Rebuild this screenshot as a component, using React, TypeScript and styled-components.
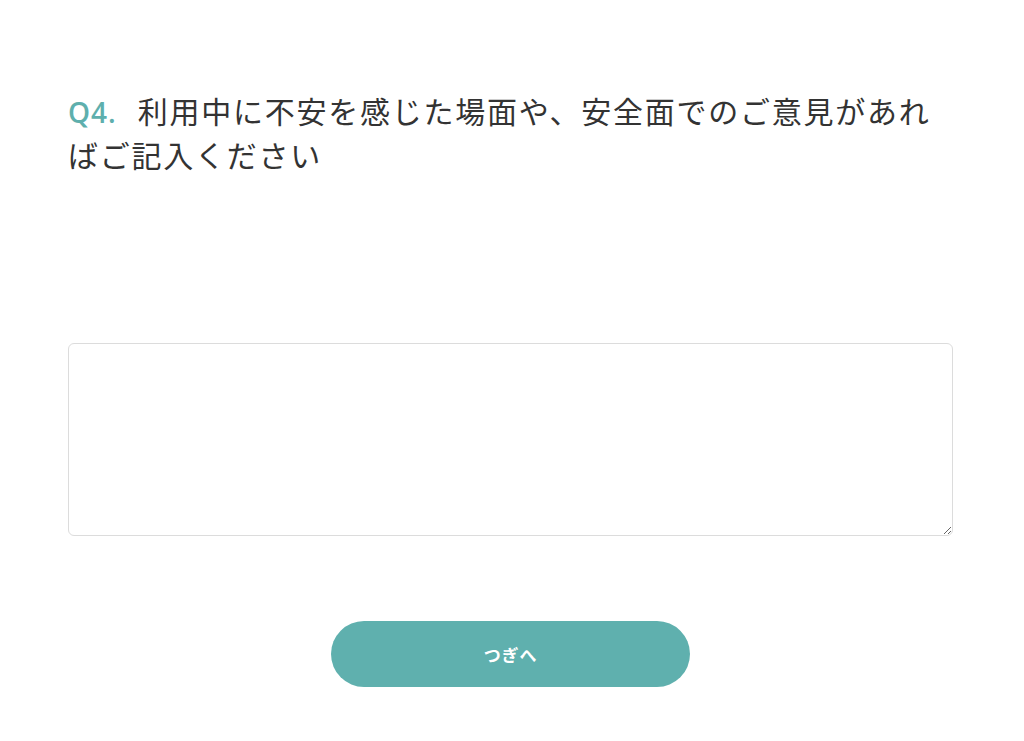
import React from "react";
import styled, { createGlobalStyle } from "styled-components";

const Global = createGlobalStyle`
  html, body { margin: 0; padding: 0; background: #ffffff; }
  body { font-family: "Noto Sans CJK JP", "Noto Sans", sans-serif; color: #333333; }
`;

const Page = styled.main`
  box-sizing: border-box;
  width: 1024px;
  padding: 89px 71px 0 68px;
  display: flex;
  flex-direction: column;
`;

const Question = styled.h2`
  margin: 0;
  font-family: "Noto Sans CJK JP", sans-serif;
  font-weight: 400;
  font-size: 30px;
  line-height: 42px;
  letter-spacing: 1.75px;
  color: #333333;
`;

const QNum = styled.span`
  font-family: "Open Sans", "Noto Sans", sans-serif;
  font-weight: 600;
  font-size: 28px;
  letter-spacing: 1px;
  color: #5eafad;
  margin-right: 21px;
`;

const Answer = styled.textarea`
  margin-top: 168px;
  height: 193px;
  box-sizing: border-box;
  width: 100%;
  border: 1px solid #dcdcdc;
  border-radius: 6px;
  padding: 12px;
  font-family: "Noto Sans CJK JP", sans-serif;
  font-size: 16px;
  resize: vertical;
  outline: none;
  display: block;
`;

const Actions = styled.div`
  margin-top: 85px;
  display: flex;
  justify-content: center;
`;

const NextButton = styled.button`
  width: 359px;
  height: 66px;
  border: none;
  border-radius: 33px;
  background: #5fb0ae;
  color: #ffffff;
  font-family: "Noto Sans CJK JP", sans-serif;
  font-weight: 700;
  font-size: 17px;
  letter-spacing: 0.8px;
  cursor: pointer;
`;

export default function App() {
  return (
    <>
      <Global />
      <Page>
        <Question>
          <QNum>Q4.</QNum>
          利用中に不安を感じた場面や、安全面でのご意見があればご記入ください
        </Question>
        <Answer />
        <Actions>
          <NextButton>つぎへ</NextButton>
        </Actions>
      </Page>
    </>
  );
}
